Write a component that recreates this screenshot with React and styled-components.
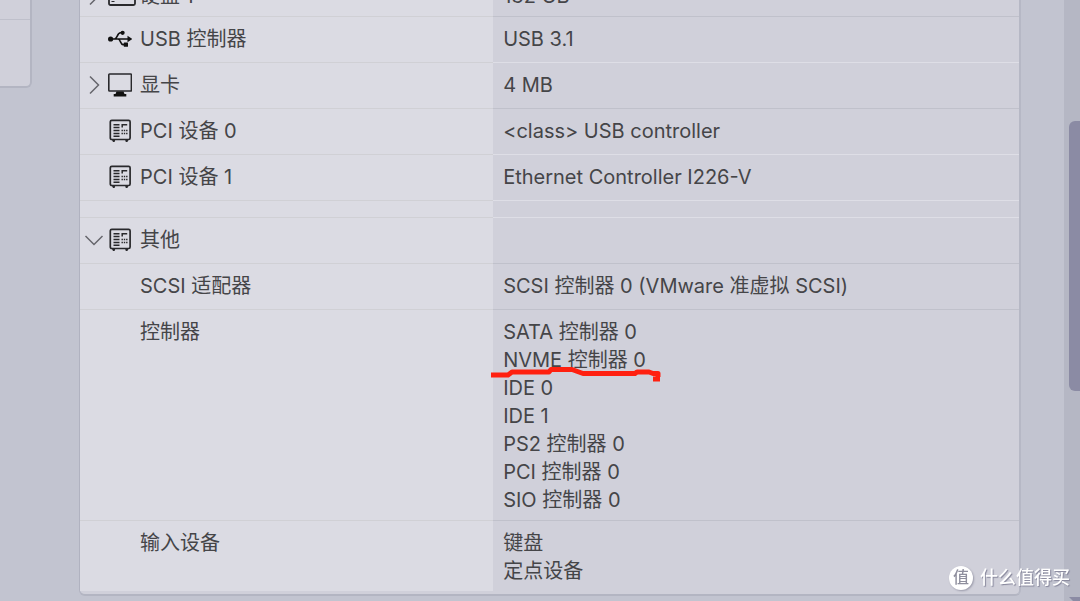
import styled, { createGlobalStyle } from "styled-components";

const GlobalStyle = createGlobalStyle`
  * {
    box-sizing: border-box;
  }
  body {
    margin: 0;
    background-color: #c2c4d0;
    font-family: "Inter", "Noto Sans CJK SC", sans-serif;
    color: #454548;
  }
`;

const Page = styled.div`
  display: flex;
  height: 100vh;
  overflow: hidden;
`;

const SidePanel = styled.aside`
  flex: 0 0 32px;
  height: 88px;
  border: solid #b3b5c2;
  border-width: 0 2px 2px 0;
  border-bottom-right-radius: 6px;
  background-color: #d0d0da;
`;

const SideRow = styled.div`
  height: 20px;
  border-bottom: 1px solid #bfc0cb;
`;

const Main = styled.main`
  flex: 1;
  min-width: 0;
  padding: 0 43px 0 47px;
`;

const Panel = styled.section`
  margin-top: -28px;
  border: 1px solid #b0b2c0;
  border-right: 2px solid #b6b8c5;
  border-bottom: 2px solid #b3b5c2;
  border-radius: 6px;
  background-color: #d0d0da;
  padding-bottom: 3px;
`;

const HardwareTable = styled.table`
  width: 100%;
  table-layout: fixed;
  border-collapse: separate;
  border-spacing: 0;
  font-size: 20px;
  line-height: 28px;
`;

const NameCell = styled.th`
  width: 44%;
  height: ${(props) => (props.$spacer ? "17px" : props.$first ? "43px" : "46px")};
  padding: ${(props) => (props.$spacer ? "0" : "8px 4px 6px")};
  border-top: 1px solid #d0d0d5;
  background-color: #dbdbe3;
  font-weight: 400;
  text-align: left;
  vertical-align: top;
`;

const ValueCell = styled.td`
  padding: ${(props) => (props.$spacer ? "0" : "8px 10px 6px")};
  border-top: 1px solid ${(props) => (props.$light ? "#dedee6" : "#c0c1cb")};
  background-color: #d0d0da;
  vertical-align: top;
`;

const NameLine = styled.div`
  display: grid;
  grid-template-columns: 20px 24px 1fr;
  column-gap: 4px;
  align-items: center;
  span {
    grid-column: 3;
    padding-left: 4px;
  }
`;

const ToggleButton = styled.button`
  display: flex;
  justify-content: center;
  padding: 0;
  border: 0;
  background: none;
  color: #66666c;
`;

const IconBox = styled.div`
  grid-column: 2;
  display: flex;
  color: #29292c;
`;

const Marked = styled.span`
  position: relative;
  svg {
    position: absolute;
    left: -12px;
    top: 16px;
  }
`;

const ScrollTrack = styled.div`
  flex: 0 0 16px;
  display: flex;
  flex-direction: column;
  justify-content: space-between;
  padding-top: 121px;
  padding-left: 5px;
  background-color: #b5b7c4;
`;

const ScrollThumb = styled.div`
  height: 270px;
  border-radius: 6px 0 0 6px;
  background-color: #8b8ba4;
`;

const ScrollArrow = styled.div`
  height: 4px;
  background-color: #8b8ba4;
  clip-path: polygon(0 0, 100% 0, 100% 100%, 4px 100%);
`;

const Watermark = styled.div`
  position: fixed;
  right: 10px;
  bottom: 10px;
  display: flex;
  align-items: center;
  gap: 7px;
  color: white;
  font-size: 18px;
  line-height: 26px;
  font-weight: 500;
  text-shadow: 1px 1px 1px #85859a;
`;

const WatermarkLogo = styled.div`
  width: 24px;
  height: 24px;
  border-radius: 50%;
  background-color: white;
  box-shadow: 1px 1px 2px #9a9aaa;
  color: #8f8f9e;
  font-size: 16px;
  line-height: 23px;
  text-align: center;
  text-shadow: none;
`;

function Chevron({ open }) {
  return (
    <svg width="20" height="20" viewBox="0 0 20 20" fill="none" stroke="currentColor" strokeWidth="1.5">
      {open ? <path d="M1.5 6L10 14.5L18.5 6" /> : <path d="M6 1.5L14.5 10L6 18.5" />}
    </svg>
  );
}

function DiskIcon() {
  return (
    <svg width="28" height="26" viewBox="0 0 28 26" overflow="visible" fill="none" stroke="currentColor" strokeWidth="1.8">
      <rect x="1" y="1" width="26" height="21" rx="1.5" />
      <path d="M3.5 15.5h3M3.5 18.5h3" strokeWidth="1.2" />
    </svg>
  );
}

function UsbIcon() {
  return (
    <svg width="24" height="24" viewBox="0 0 24 24" fill="none" stroke="#111" strokeWidth="1.6">
      <path d="M3 12H21M6.500 12C9.500 12 9 5.800 12.500 5.800H14M10 12C12.500 12 12.500 17.600 15 17.600H17" />
      <circle cx="2.600" cy="12" r="2.600" fill="#111" stroke="none" />
      <circle cx="14.600" cy="5.800" r="2.100" fill="#111" stroke="none" />
      <rect x="15.800" y="15.600" width="4.200" height="4.200" rx="0.600" fill="#111" stroke="none" />
      <path d="M19.500 8.800L24.400 12L19.500 15.200z" fill="#111" stroke="none" />
    </svg>
  );
}

function MonitorIcon() {
  return (
    <svg width="24" height="24" viewBox="0 0 24 24">
      <rect x="0.800" y="1" width="22.600" height="17" rx="0.800" fill="none" stroke="currentColor" strokeWidth="1.600" />
      <path d="M8.500 18.500h7L16.500 21H18.300v2.500H5.700V21H7.500z" fill="#111" />
    </svg>
  );
}

function DeviceIcon() {
  return (
    <svg width="24" height="24" viewBox="0 0 24 24">
      <rect x="2.300" y="1.300" width="19.800" height="19.200" rx="1.500" fill="none" stroke="currentColor" strokeWidth="1.700" />
      <path d="M4 21h3.200l-0.600 2H5zM17.200 21h3.200l-1 2h-1.600z" fill="currentColor" />
      <path d="M5.500 5.800h6M5.500 8.600h6M5.500 11.500h6M5.500 14.500h6M5.500 17.300h6" stroke="currentColor" strokeWidth="1.500" />
      <path d="M14.200 8.500V5.800h5" fill="none" stroke="currentColor" strokeWidth="1.500" />
      <path d="M13.500 11.500h6M13.500 14.500h6" stroke="currentColor" strokeWidth="1.500" strokeDasharray="1.400 0.900" />
    </svg>
  );
}

function RedStroke() {
  return (
    <svg width="172" height="20" viewBox="0 0 172 20" fill="none" stroke="#ff2010" strokeWidth="5" strokeLinejoin="round">
      <path d="M0 11H17L21 8H58L60 5.500H81L92 9.500H144L146 8H158L162 9.500H167V13" />
      <path d="M162 15H169" />
    </svg>
  );
}

const rows = [
  { name: "硬盘 1", icon: DiskIcon, toggle: "closed", values: ["132 GB"] },
  { name: "USB 控制器", icon: UsbIcon, values: ["USB 3.1"] },
  { name: "显卡", icon: MonitorIcon, toggle: "closed", values: ["4 MB"], light: true },
  { name: "PCI 设备 0", icon: DeviceIcon, values: ["<class> USB controller"] },
  { name: "PCI 设备 1", icon: DeviceIcon, values: ["Ethernet Controller I226-V"], light: true },
  { spacer: true, light: true },
  { name: "其他", icon: DeviceIcon, toggle: "open", values: [], light: true },
  { name: "SCSI 适配器", values: ["SCSI 控制器 0 (VMware 准虚拟 SCSI)"] },
  {
    name: "控制器",
    values: ["SATA 控制器 0", "NVME 控制器 0", "IDE 0", "IDE 1", "PS2 控制器 0", "PCI 控制器 0", "SIO 控制器 0"],
    marked: "NVME 控制器 0",
  },
  { name: "输入设备", values: ["键盘", "定点设备"] },
];

function HardwareRow({ row, first }) {
  if (row.spacer) {
    return (
      <tr>
        <NameCell as="td" $spacer />
        <ValueCell $spacer $light={row.light} />
      </tr>
    );
  }
  const Icon = row.icon;
  return (
    <tr>
      <NameCell scope="row" $first={first}>
        <NameLine>
          {row.toggle && (
            <ToggleButton type="button" aria-label={row.name} aria-expanded={row.toggle === "open"}>
              <Chevron open={row.toggle === "open"} />
            </ToggleButton>
          )}
          {Icon && (
            <IconBox>
              <Icon />
            </IconBox>
          )}
          <span>{row.name}</span>
        </NameLine>
      </NameCell>
      <ValueCell $light={row.light}>
        {row.values.map((value) => (
          <div key={value}>
            {value === row.marked ? (
              <Marked>
                {value}
                <RedStroke />
              </Marked>
            ) : (
              value
            )}
          </div>
        ))}
      </ValueCell>
    </tr>
  );
}

export default function App() {
  return (
    <>
      <GlobalStyle />
      <Page>
        <SidePanel>
          <SideRow />
        </SidePanel>
        <Main>
          <Panel>
            <HardwareTable>
              <tbody>
                {rows.map((row, index) => (
                  <HardwareRow key={index} row={row} first={index === 0} />
                ))}
              </tbody>
            </HardwareTable>
          </Panel>
        </Main>
        <ScrollTrack>
          <ScrollThumb />
          <ScrollArrow />
        </ScrollTrack>
      </Page>
      <Watermark>
        <WatermarkLogo>值</WatermarkLogo>
        什么值得买
      </Watermark>
    </>
  );
}
